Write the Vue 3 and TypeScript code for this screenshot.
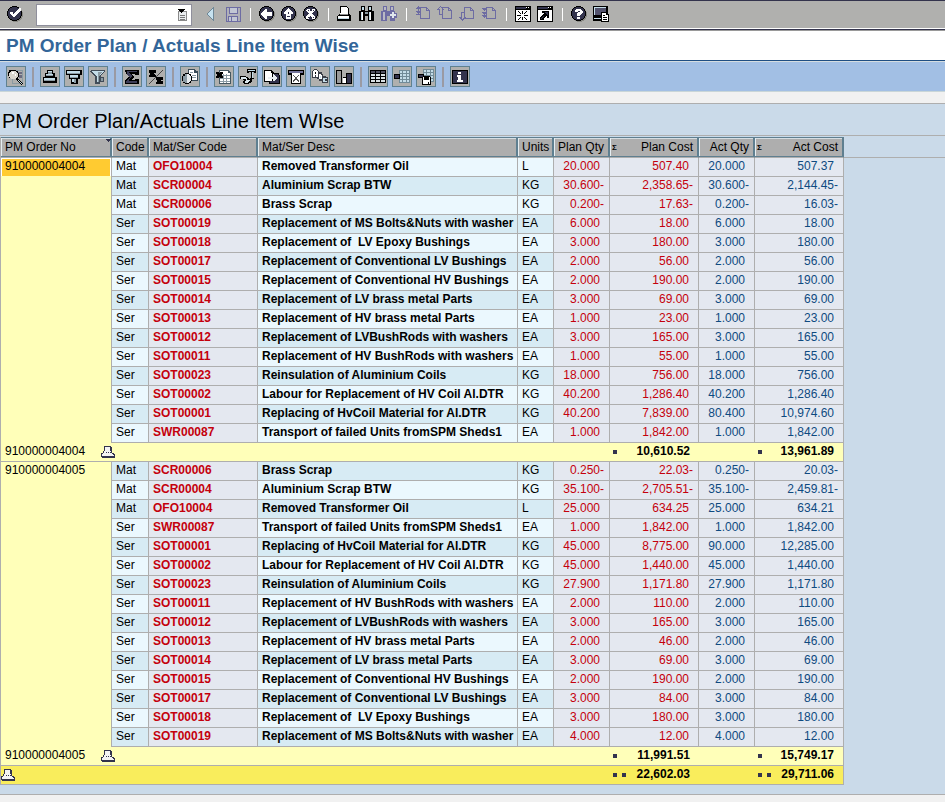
<script setup lang="ts">
interface Layer {
  d: string
  f?: string
  s?: string
}
interface Tool {
  label: string
  icon: Layer[]
}
interface Item {
  kind: string
  code: string
  desc: string
  unit: string
  planQty: string
  planCost: string
  actQty: string
  actCost: string
}
interface Group {
  order: string
  items: Item[]
  planCost: string
  actCost: string
}

const K = '#000000'
const D = '#33334d'
const W = '#ffffff'
const B = '#c3dce8'
const G = '#8a9aa3'
const P = '#6d6ca3'

const disc =
  'M5 0h5v1h2v1h1v1h1v2h1v5h-1v2h-1v1h-1v1h-2v1h-5v-1h-2v-1h-1v-1h-1v-2h-1v-5h1v-2h1v-1h1v-1h2z'
const discLayers: Layer[] = [
  { d: 'M6 1h5v1h2v1h1v1h1v2h1v5h-1v2h-1v1h-1v1h-2v1h-5v-1h-2v-1h-1z', f: '#8b8b86' },
  { d: disc, f: K },
  { d: 'M5 1h5v1h2v1h1v2h1v5h-1v2h-1v1h-2v1h-5v-1h-2v-1h-1v-2h-1v-5h1v-2h1v-1h2z', f: D },
]
const page = 'M5.5 1.5h6l3 3v8h-9z M11.5 1.5v3h3'
const sheet = 'M1 1h14v14h-14z'

const systemTools: Tool[][] = [
  [
    {
      label: 'Back',
      icon: [
        ...discLayers,
        { d: 'M2 7h1v-1h1v-1h1v-1h1v-1h2v3h5v4h-5v3h-2v-1h-1v-1h-1v-1h-1v-1h-1z', f: W },
      ],
    },
    {
      label: 'Exit',
      icon: [
        ...discLayers,
        { d: 'M7 2h1v1h1v1h1v1h1v1h1v2h-2v1h-5v-1h-2v-2h1v-1h1v-1h1v-1h1z M5 9h5v4h-5z', f: W },
        { d: 'M7 6h1v2h-1z M6 10h3v1h-3z', f: D },
      ],
    },
    {
      label: 'Cancel',
      icon: [
        ...discLayers,
        { d: 'M4 3h3v2h2v-2h3v2h-1v1h-1v1h-1v1h1v1h1v1h1v3h-3v-2h-1v-1h-1v1h-1v2h-3v-3h1v-1h1v-1h1v-1h-1v-1h-1v-1h-1z', f: W },
        { d: 'M5 4h1v1h-1z M10 11h1v1h-1z M10 4h1v1h-1z M5 11h1v1h-1z', f: D },
      ],
    },
  ],
  [
    {
      label: 'Print',
      icon: [
        { d: 'M3 0h7v1h1v1h1v6h1v1h1v6h-14v-5h1v-1h1v-1h1z', f: K },
        { d: 'M4 1h6v1h1v6h-8v-1h1z M1 10h11v3h-11z', f: W },
        { d: 'M1 12h11v1h-11z', f: B },
        { d: 'M3 8h8v1h-8z', f: '#8d8d8d' },
      ],
    },
    {
      label: 'Find',
      icon: [
        { d: 'M2 0h4v5h3v-5h4v5h2v10h-6v-5h-3v5h-6v-10h2z', f: K },
        { d: 'M3 1h2v3h-2z M2 6h2v8h-2z M10 1h2v3h-2z M10 6h2v8h-2z', f: B },
        { d: 'M3 6h1v8h-1z M11 6h1v8h-1z', f: W },
        { d: 'M6 6h3v2h-3z', f: G },
      ],
    },
    {
      label: 'Find next',
      icon: [
        { d: 'M2 0h4v5h3v-5h4v5h1v2h2v5h-2v3h-5v-5h-3v5h-6v-10h2z', f: P },
        { d: 'M3 1h2v3h-2z M2 6h2v8h-2z M10 1h2v3h-2z', f: '#b9b9c4' },
        { d: 'M11 6h2v2h2v2h-2v2h-2v-2h-2v-2h2z', f: '#dfe6ec' },
      ],
    },
  ],
  [
    {
      label: 'First page',
      icon: [
        { d: page, s: P },
        { d: 'M3 0h1v1h1v1h1v1h-2v2h2v1h-1v1h-1v2h-1v-2h-1v-1h-1v-1h2v-2h-2v-1h1v-1h1z M1 8h5v1h-5z', f: P },
      ],
    },
    {
      label: 'Previous page',
      icon: [
        { d: page, s: P },
        { d: 'M3.5 0.5l3 3h-1.5v5h-3v-5h-1.5z', s: P, f: '#b0b0ae' },
      ],
    },
    {
      label: 'Next page',
      icon: [
        { d: page, s: P },
        { d: 'M3.5 14l-3-3h1.5v-5h3v5h1.5z', s: P, f: '#b0b0ae' },
      ],
    },
    {
      label: 'Last page',
      icon: [
        { d: page, s: P },
        { d: 'M1 2h5v1h-1v1h-1v1h-1v-1h-1v-1h-1z M1 6h5v1h-1v1h-1v1h2v1h-1v1h-1v1h-1v-1h-1v-1h-1v-1h2v-1h-1v-1h-1z', f: P },
      ],
    },
  ],
  [
    {
      label: 'Create session',
      icon: [
        { d: 'M0 0h16v16h-16z', f: K },
        { d: 'M1 4h14v11h-14z', f: W },
        { d: 'M1 1h10v2h-10z', f: D },
        { d: 'M11 1h1v1h-1z M13 1h1v1h-1z', f: W },
        { d: 'M7 5h1v3h-1z M7 11h1v3h-1z M2 9h4v1h-4z M9 9h4v1h-4z M3 5h1v1h-1z M4 6h1v1h-1z M5 7h1v1h-1z M11 5h1v1h-1z M10 6h1v1h-1z M9 7h1v1h-1z M5 11h1v1h-1z M4 12h1v1h-1z M3 13h1v1h-1z M9 11h1v1h-1z M10 12h1v1h-1z M11 13h1v1h-1z', f: K },
      ],
    },
    {
      label: 'Generate shortcut',
      icon: [
        { d: 'M0 0h16v16h-16z', f: K },
        { d: 'M1 4h14v11h-14z', f: W },
        { d: 'M1 1h10v2h-10z', f: D },
        { d: 'M11 1h1v1h-1z M13 1h1v1h-1z', f: W },
        { d: 'M5 5h7v7h-2v-2h-1v1h-1v1h-1v2h-4v-3h1v-1h1v-1h1v-1h1v-1h-2z', f: K },
        { d: 'M4 12h1v-1h1v-1h1v1h-1v1h-1v1h-1z M8 6h3v3h-1v-1h-1v-1h-1z', f: D },
      ],
    },
  ],
  [
    {
      label: 'Help',
      icon: [
        ...discLayers,
        { d: 'M5 3h5v1h1v1h1v2h-1v1h-1v1h-1v1h-3v-3h1v-1h2v-1h-2v1h-3v-2h1z M6 11h3v2h-3z', f: W },
      ],
    },
    {
      label: 'Customize local layout',
      icon: [
        { d: 'M0 0h15v11h-15z M0 11h16v4h-16z', f: K },
        { d: 'M1 1h12v1h-12z M1 1h1v8h-1z M1 12h8v1h-8z', f: B },
        { d: 'M2 2h11v7h-11z', f: '#53536e' },
        { d: 'M8 6h6v2h2v8h-8z', f: K },
        { d: 'M9 7h4v2h2v6h-6z', f: W },
        { d: 'M10 9h2v1h-2z M10 11h4v1h-4z M10 13h4v1h-4z', f: K },
      ],
    },
  ],
]

const reportTools: Tool[][] = [
  [
    {
      label: 'Details',
      icon: [
        { d: 'M4.5 1.5h10v13h-10z', s: G },
        { d: 'M10 3h4v2h-4z M11 6h3v3h-3z', f: '#6b6b80' },
        { d: 'M3 1h5v1h2v2h1v4h-1v2h1v1h1v1h1v1h1v1h1v1h-1v1h-1v-1h-1v-1h-1v-1h-1v-1h-1v-1h-1v-1h-5v-1h-2v-2h-1v-4h1v-2h2z', f: K },
        { d: 'M3 2h5v1h1v1h1v4h-1v1h-1v1h-5v-1h-1v-1h-1v-4h1v-1h1z', f: '#d9d6ce' },
        { d: 'M4 3h2v2h-2z M7 5h1v2h-1z', f: W },
        { d: 'M10 11h1v1h1v1h1v1h1v1h-1v-1h-1v-1h-1v-1h-1z', f: B },
      ],
    },
  ],
  [
    {
      label: 'Sort ascending',
      icon: [
        { d: 'M5 1h6v3h2v4h2v6h-14v-6h2v-4h2z', f: K },
        { d: 'M6 2h4v2h-4z M4 5h7v2h-7z M2 9h11v3h-11z', f: B },
        { d: 'M6 3h4v2h-4z M4 6h7v1h-7z M2 11h11v1h-11z', f: G },
      ],
    },
    {
      label: 'Sort descending',
      icon: [
        { d: 'M0 1h16v5h-2v4h-2v5h-7v-5h-2v-4h-3z', f: K },
        { d: 'M1 2h13v2h-13z M4 6h8v2h-8z M6 10h4v3h-4z', f: B },
        { d: 'M1 4h13v1h-13z M4 8h8v1h-8z M8 10h2v4h-2z', f: G },
      ],
    },
    {
      label: 'Set filter',
      icon: [
        { d: 'M1 1h14v2h-1v1h-1v1h-1v1h-1v2h3v5h-4v2h-5v-8h-1v-1h-1v-1h-1v-1h-1v-1h-1z', f: '#414c59' },
        { d: 'M2 2h12v1h-1v1h-1v1h-1v1h-1v1h-1v6h-2v-6h-1v-1h-1v-1h-1v-1h-1v-1h-1z', f: B },
        { d: 'M8 3h4v1h-1v1h-1v2h-1v6h-1z M11 9h2v3h-2z', f: G },
      ],
    },
  ],
  [
    {
      label: 'Total',
      icon: [
        { d: 'M1 1h14v5h-4v-1h-3v1h1v1h1v2h-1v1h-1v1h3v-1h4v5h-14v-4h1v-1h1v-1h1v-1h1v-1h-1v-1h-1v-1h-1z', f: K },
        { d: 'M3 2h10v1h-8v1h1v1h1v1h1v2h-1v1h-1v1h-1v2h8v2h-11v-2h1v-1h1v-1h1v-1h1v-1h-1v-1h-1v-1h-1z', f: '#3e3e58' },
      ],
    },
    {
      label: 'Subtotals',
      icon: [
        { d: 'M1 1h7v3h-2v1h1v1h1v2h-7v-2h1v-2h-1z M8 8h7v3h-2v1h2v3h-7v-2h1v-2h-1z', f: K },
        { d: 'M14 1h1v1h-1v1h-1v1h-1v1h-1v1h-1v1h-1v1h-1v1h-1v1h-1v1h-1v1h-1v1h-1v1h-1v1h-1v-1h1v-1h1v-1h1v-1h1v-1h1v-1h1v-1h1v-1h1v-1h1v-1h1v-1h1v-1h1v-1h1z', f: '#444' },
      ],
    },
  ],
  [
    {
      label: 'Print preview',
      icon: [
        { d: 'M6 0h7v1h1v1h2v10h-10z', f: '#394b58' },
        { d: 'M7 1h5v3h3v7h-8z', f: W },
        { d: 'M8 3h3v1h-3z M10 6h4v1h-4z M10 8h4v1h-4z', f: G },
        { d: 'M3 4h4v1h2v2h1v5h-1v2h-2v1h-4v-1h-2v-2h-1v-5h1v-2h2z', f: K },
        { d: 'M3 5h3v9h-3v-1h-2v-6h2z', f: G },
        { d: 'M5 5h2v1h1v1h1v5h-1v1h-1v1h-2z', f: '#e7ecef' },
      ],
    },
  ],
  [
    {
      label: 'Microsoft Excel',
      icon: [
        { d: 'M3 1h10v1h1v1h1v12h-12z', f: '#455761' },
        { d: 'M4 2h8v2h2v10h-10z', f: W },
        { d: 'M4 6h10v1h-10z M4 9h10v1h-10z M4 12h10v1h-10z M7 5h1v9h-1z M10 5h1v9h-1z', f: G },
        { d: 'M0 3h3v1h1v-1h3v2h-1v2h1v2h-3v-1h-1v1h-3v-2h1v-2h-1z', f: K },
      ],
    },
    {
      label: 'Word processing',
      icon: [
        { d: 'M7 0h9v4h-2v-1h-1v6h1v1h-4v-1h1v-6h-2v1h-2z', f: K },
        { d: 'M8 1h7v1h-7z M12 3h1v6h-1z', f: B },
        { d: 'M0 7h6v1h2v1h1v1h3v3h-1v1h-2v1h-5v-1h-1v-2h1v-1h-1v-1h-3z', f: K },
        { d: 'M1 8h5v1h1v2h3v1h-1v1h-1v1h-3v-2h1v-2h-5z', f: '#dbe8ee' },
      ],
    },
    {
      label: 'Local file',
      icon: [
        { d: 'M0 1h8v1h1v1h1v10h-10z', f: K },
        { d: 'M1 2h6v2h2v8h-8z', f: W },
        { d: 'M8 4h7v2h1v9h-11v-3h3z', f: K },
        { d: 'M9 5h5v1h1v8h-9v-2h3z', f: D },
        { d: 'M4 8h5v-3h1v1h1v1h1v1h1v2h-1v1h-1v1h-2v-2h-5z', f: '#e8eef2' },
      ],
    },
    {
      label: 'Mail recipient',
      icon: [
        { d: 'M0 1h16v5h-3v9h-10v-9h-3z', f: K },
        { d: 'M1 2h14v2h-14z', f: '#74749a' },
        { d: 'M4 4h8v10h-8z', f: W },
        { d: 'M5 6h1v1h1v1h2v-1h1v-1h1v1h-1v1h-1v2h1v1h1v2h-1v-1h-1v-1h-2v1h-1v1h-1v-2h1v-1h1v-2h-1v-1h-1z', f: '#545454' },
      ],
    },
    {
      label: 'ABC analysis',
      icon: [
        { d: 'M2 0h3v1h1v1h1v1h3v2h1v2h3v1h2v6h-6v-2h-3v-2h-2v-1h-5v-7h1v-1h1z', f: '#3a3f49' },
        { d: 'M2 1h3v1h1v6h-2v-2h-1v2h-2v-6h1z M7 5h2v1h1v4h-3z', f: W },
        { d: 'M3 3h1v2h-1z', f: K },
        { d: 'M8 7h1v2h-1z M11 9h4v1h-2v2h2v1h-4z', f: B },
      ],
    },
    {
      label: 'Graphic',
      icon: [
        { d: 'M0 1h6v13h1v-6h3v-4h6v11h-16z', f: K },
        { d: 'M1 2h4v12h-4z', f: '#9b9b9b' },
        { d: 'M7 9h3v5h-3z', f: W },
        { d: 'M11 5h4v9h-4z', f: D },
      ],
    },
  ],
  [
    {
      label: 'Change layout',
      icon: [
        { d: 'M0 1h16v13h-16z', f: K },
        { d: 'M1 5h4v2h-4z M6 5h4v2h-4z M11 5h4v2h-4z M1 8h4v2h-4z M6 8h4v2h-4z M11 8h4v2h-4z M1 11h4v2h-4z M6 11h4v2h-4z M11 11h4v2h-4z', f: '#d9e0e3' },
        { d: 'M1 2h4v2h-4z M6 2h4v2h-4z M11 2h4v2h-4z', f: '#50505f' },
      ],
    },
    {
      label: 'Select layout',
      icon: [
        { d: 'M5 1h11v13h-11z', f: '#718b98' },
        { d: 'M6 2h2v2h-2z M9 2h3v2h-3z M13 2h2v2h-2z M6 5h2v2h-2z M9 5h3v2h-3z M13 5h2v2h-2z M6 8h2v2h-2z M9 8h3v2h-3z M13 8h2v2h-2z M6 11h2v2h-2z M9 11h3v2h-3z M13 11h2v2h-2z', f: B },
        { d: 'M0 5h6v5h-6z', f: K },
        { d: 'M1 6h4v3h-4z', f: D },
      ],
    },
    {
      label: 'Save layout',
      icon: [
        { d: 'M5 0h11v13h-11z', f: '#718b98' },
        { d: 'M6 1h2v2h-2z M9 1h3v2h-3z M13 1h2v2h-2z M6 4h2v2h-2z M9 4h3v2h-3z M13 4h2v2h-2z M13 7h2v2h-2z M13 10h2v2h-2z', f: B },
        { d: 'M0 5h6v4h-6z M4 7h8v1h1v8h-9z', f: K },
        { d: 'M1 6h4v2h-4z', f: D },
        { d: 'M5 8h1v3h5v-3h1v7h-1v-2h-1v2h-5z', f: W },
      ],
    },
  ],
  [
    {
      label: 'Information',
      icon: [
        { d: 'M0 1h16v14h-16z', f: K },
        { d: 'M1 2h14v12h-14z', f: D },
        { d: 'M6 3h3v2h-3z M5 6h4v5h2v2h-6v-2h1v-3h-1z', f: W },
      ],
    },
  ],
]

const checkIcon: Layer[] = [
  ...discLayers,
  { d: 'M3 6h3v2h1v-1h1v-1h1v-1h1v-1h1v-1h1v-1h2v3h-1v1h-1v1h-1v1h-1v1h-1v1h-1v1h-2v-1h-1v-1h-1v-1h-1z', f: W },
]
const historyIcon: Layer[] = [
  { d: 'M1 2h9v10h-9z', f: '#e9ecee' },
  { d: 'M1.5 2.5h8v9h-8z', s: '#8a8a8a' },
  { d: 'M3 6h5v1h-5z M3 8h5v1h-5z M3 10h5v1h-5z', f: '#777' },
  { d: 'M1 0h7v1h-1v1h-1v1h-1v1h-1v-1h-1v-1h-1v-1h-1z', f: K },
]
const collapseIcon: Layer[] = [
  { d: 'M7 1v12l-6-6z', f: '#c6e2f0' },
  { d: 'M7 1v12l-6-6z', s: '#6f8796' },
]
const saveIcon: Layer[] = [
  { d: sheet, s: P, f: '#b0b0b8' },
  { d: 'M4 1.5h8v6h-8z M3.5 14.5v-4h9v4 M6.5 10.5v4', s: P, f: '#c2c7d4' },
]
const printIcon: Layer[] = [
  { d: 'M3 0h7v1h1v6h2v1h1v4h-13v-1h-1v-4h2v-2h1z', f: D },
  { d: 'M4 1h5v4h1v2h1v1h1v1h1v1h-12v-2h1v-1h1v-2h1z', f: '#f4f4f4' },
  { d: 'M5 6h1v1h-1z M7 6h1v1h-1z M9 6h1v1h-1z', f: D },
]
const sortMark: Layer[] = [{ d: 'M0 0h5v1h-1v1h-1v1h-1v-1h-1v-1h-1z', f: D }]

const parse = (rows: string): Item[] =>
  rows
    .trim()
    .split('\n')
    .map((row) => {
      const [kind, code, desc, unit, planQty, planCost, actQty, actCost] = row.trim().split('|')
      return { kind, code, desc, unit, planQty, planCost, actQty, actCost }
    })

const groups: Group[] = [
  {
    order: '910000004004',
    planCost: '10,610.52',
    actCost: '13,961.89',
    items: parse(`
      Mat|OFO10004|Removed Transformer Oil|L|20.000|507.40|20.000|507.37
      Mat|SCR00004|Aluminium Scrap BTW|KG|30.600-|2,358.65-|30.600-|2,144.45-
      Mat|SCR00006|Brass Scrap|KG|0.200-|17.63-|0.200-|16.03-
      Ser|SOT00019|Replacement of MS Bolts&Nuts with washer|EA|6.000|18.00|6.000|18.00
      Ser|SOT00018|Replacement of  LV Epoxy Bushings|EA|3.000|180.00|3.000|180.00
      Ser|SOT00017|Replacement of Conventional LV Bushings|EA|2.000|56.00|2.000|56.00
      Ser|SOT00015|Replacement of Conventional HV Bushings|EA|2.000|190.00|2.000|190.00
      Ser|SOT00014|Replacement of LV brass metal Parts|EA|3.000|69.00|3.000|69.00
      Ser|SOT00013|Replacement of HV brass metal Parts|EA|1.000|23.00|1.000|23.00
      Ser|SOT00012|Replacement of LVBushRods with washers|EA|3.000|165.00|3.000|165.00
      Ser|SOT00011|Replacement of HV BushRods with washers|EA|1.000|55.00|1.000|55.00
      Ser|SOT00023|Reinsulation of Aluminium Coils|KG|18.000|756.00|18.000|756.00
      Ser|SOT00002|Labour for Replacement of HV Coil Al.DTR|KG|40.200|1,286.40|40.200|1,286.40
      Ser|SOT00001|Replacing of HvCoil Material for Al.DTR|KG|40.200|7,839.00|80.400|10,974.60
      Ser|SWR00087|Transport of failed Units fromSPM Sheds1|EA|1.000|1,842.00|1.000|1,842.00
    `),
  },
  {
    order: '910000004005',
    planCost: '11,991.51',
    actCost: '15,749.17',
    items: parse(`
      Mat|SCR00006|Brass Scrap|KG|0.250-|22.03-|0.250-|20.03-
      Mat|SCR00004|Aluminium Scrap BTW|KG|35.100-|2,705.51-|35.100-|2,459.81-
      Mat|OFO10004|Removed Transformer Oil|L|25.000|634.25|25.000|634.21
      Ser|SWR00087|Transport of failed Units fromSPM Sheds1|EA|1.000|1,842.00|1.000|1,842.00
      Ser|SOT00001|Replacing of HvCoil Material for Al.DTR|KG|45.000|8,775.00|90.000|12,285.00
      Ser|SOT00002|Labour for Replacement of HV Coil Al.DTR|KG|45.000|1,440.00|45.000|1,440.00
      Ser|SOT00023|Reinsulation of Aluminium Coils|KG|27.900|1,171.80|27.900|1,171.80
      Ser|SOT00011|Replacement of HV BushRods with washers|EA|2.000|110.00|2.000|110.00
      Ser|SOT00012|Replacement of LVBushRods with washers|EA|3.000|165.00|3.000|165.00
      Ser|SOT00013|Replacement of HV brass metal Parts|EA|2.000|46.00|2.000|46.00
      Ser|SOT00014|Replacement of LV brass metal Parts|EA|3.000|69.00|3.000|69.00
      Ser|SOT00015|Replacement of Conventional HV Bushings|EA|2.000|190.00|2.000|190.00
      Ser|SOT00017|Replacement of Conventional LV Bushings|EA|3.000|84.00|3.000|84.00
      Ser|SOT00018|Replacement of  LV Epoxy Bushings|EA|3.000|180.00|3.000|180.00
      Ser|SOT00019|Replacement of MS Bolts&Nuts with washer|EA|4.000|12.00|4.000|12.00
    `),
  },
]

const digits = (v: string): string => v.replace('-', '')
const sign = (v: string): string => (v.endsWith('-') ? '-' : '')
</script>

<template>
  <main class="window">
    <header class="system-bar">
      <button class="icon-btn" type="button" aria-label="Enter">
        <svg viewBox="0 0 16 16" width="16" height="16"><path v-for="(l, i) in checkIcon" :key="i" :d="l.d" :fill="l.f ?? 'none'" :stroke="l.s ?? 'none'" /></svg>
      </button>
      <div class="command">
        <input class="command-input" type="text" aria-label="Command field" />
        <button class="command-list" type="button" aria-label="Command history">
          <svg viewBox="0 0 11 12" width="11" height="12"><path v-for="(l, i) in historyIcon" :key="i" :d="l.d" :fill="l.f ?? 'none'" :stroke="l.s ?? 'none'" /></svg>
        </button>
      </div>
      <button class="collapse" type="button" aria-label="Hide command field">
        <svg viewBox="0 0 8 14" width="8" height="14"><path v-for="(l, i) in collapseIcon" :key="i" :d="l.d" :fill="l.f ?? 'none'" :stroke="l.s ?? 'none'" /></svg>
      </button>
      <button class="icon-btn" type="button" aria-label="Save">
        <svg viewBox="0 0 16 16" width="16" height="16"><path v-for="(l, i) in saveIcon" :key="i" :d="l.d" :fill="l.f ?? 'none'" :stroke="l.s ?? 'none'" /></svg>
      </button>
      <template v-for="(set, s) in systemTools" :key="s">
        <span class="divider"></span>
        <button v-for="t in set" :key="t.label" class="icon-btn" type="button" :aria-label="t.label">
          <svg viewBox="0 0 16 16" width="16" height="16"><path v-for="(l, i) in t.icon" :key="i" :d="l.d" :fill="l.f ?? 'none'" :stroke="l.s ?? 'none'" /></svg>
        </button>
      </template>
    </header>

    <h1 class="screen-title">PM Order Plan / Actuals Line Item Wise</h1>

    <nav class="report-bar" aria-label="Report functions">
      <template v-for="(set, s) in reportTools" :key="s">
        <span v-if="s > 0" class="report-divider"></span>
        <button v-for="t in set" :key="t.label" class="report-btn" type="button" :aria-label="t.label">
          <svg viewBox="0 0 16 16" width="16" height="16"><path v-for="(l, i) in t.icon" :key="i" :d="l.d" :fill="l.f ?? 'none'" :stroke="l.s ?? 'none'" /></svg>
        </button>
      </template>
    </nav>

    <section class="report">
      <h2 class="report-title">PM Order Plan/Actuals Line Item WIse</h2>
      <div class="grid-area">
        <table class="grid">
          <colgroup>
            <col class="w-order" />
            <col class="w-kind" />
            <col class="w-code" />
            <col class="w-desc" />
            <col class="w-unit" />
            <col class="w-qty" />
            <col class="w-cost" />
            <col class="w-qty" />
            <col class="w-cost" />
          </colgroup>
          <thead>
            <tr>
              <th scope="col">
                PM Order No
                <svg class="sort-mark" viewBox="0 0 5 3" width="5" height="3"><path v-for="(l, i) in sortMark" :key="i" :d="l.d" :fill="l.f" /></svg>
              </th>
              <th scope="col">Code</th>
              <th scope="col">Mat/Ser Code</th>
              <th scope="col">Mat/Ser Desc</th>
              <th scope="col">Units</th>
              <th scope="col" class="right">Plan Qty</th>
              <th scope="col" class="right"><div class="spread"><span class="sum">Σ</span>Plan Cost</div></th>
              <th scope="col" class="right">Act Qty</th>
              <th scope="col" class="right"><div class="spread"><span class="sum">Σ</span>Act Cost</div></th>
            </tr>
          </thead>
          <tbody v-for="(g, gi) in groups" :key="g.order">
            <tr v-for="(r, ri) in g.items" :key="r.code" :class="{ odd: (gi * 15 + ri) % 2 === 1 }">
              <th v-if="ri === 0" class="order" scope="rowgroup" :rowspan="g.items.length">
                <div class="order-no" :class="{ focused: gi === 0 }">{{ g.order }}</div>
              </th>
              <td class="band">{{ r.kind }}</td>
              <td class="code">{{ r.code }}</td>
              <td class="band desc">{{ r.desc }}</td>
              <td class="band">{{ r.unit }}</td>
              <td class="num plan">{{ digits(r.planQty) }}<span class="sign">{{ sign(r.planQty) }}</span></td>
              <td class="num plan">{{ digits(r.planCost) }}<span class="sign">{{ sign(r.planCost) }}</span></td>
              <td class="num act">{{ digits(r.actQty) }}<span class="sign">{{ sign(r.actQty) }}</span></td>
              <td class="num act">{{ digits(r.actCost) }}<span class="sign">{{ sign(r.actCost) }}</span></td>
            </tr>
            <tr class="subtotal">
              <th colspan="6" scope="row">
                <div class="total-label">
                  {{ g.order }}
                  <svg viewBox="0 0 14 12" width="14" height="12"><path v-for="(l, i) in printIcon" :key="i" :d="l.d" :fill="l.f" /></svg>
                </div>
              </th>
              <td><div class="spread"><span class="dots"><i></i></span><b>{{ g.planCost }}</b></div></td>
              <td></td>
              <td class="last"><div class="spread"><span class="dots"><i></i></span><b>{{ g.actCost }}</b></div></td>
            </tr>
          </tbody>
          <tfoot>
            <tr class="grand">
              <th colspan="6" scope="row" class="grand-label">
                <div class="total-label">
                  <svg viewBox="0 0 14 12" width="14" height="12" role="img" aria-label="Grand total"><path v-for="(l, i) in printIcon" :key="i" :d="l.d" :fill="l.f" /></svg>
                </div>
              </th>
              <td><div class="spread"><span class="dots"><i></i><i></i></span><b>22,602.03</b></div></td>
              <td></td>
              <td class="last"><div class="spread"><span class="dots"><i></i><i></i></span><b>29,711.06</b></div></td>
            </tr>
          </tfoot>
        </table>
        <div class="grid-rest"></div>
      </div>
    </section>
  </main>
</template>

<style>
body {
  margin: 0;
  background: #f1f1f1;
}
</style>

<style scoped>
.window {
  font-family: 'Liberation Sans', Arial, sans-serif;
  font-size: 12px;
  color: #000;
}
svg {
  display: block;
  shape-rendering: crispEdges;
}
button {
  margin: 0;
  padding: 0;
  border: 0;
  background: none;
  flex: none;
}
.system-bar {
  display: flex;
  align-items: center;
  gap: 6px;
  box-sizing: border-box;
  height: 31px;
  padding: 0 7px 4px;
  background: #b0b0ae;
  border-top: 1px solid #33334d;
  box-shadow: inset 0 -1px #9a9a9a, inset 0 -2px #33334d, inset 0 -3px #fff;
}
.command {
  display: flex;
  align-items: center;
  box-sizing: border-box;
  width: 156px;
  height: 22px;
  margin: 2px 8px 0 7px;
  padding-right: 3px;
  background: #fff;
  border: 1px solid #8f8f9c;
}
.command-input {
  flex: 1;
  min-width: 0;
  height: 18px;
  padding: 0 4px;
  border: 0;
  outline: 0;
  background: transparent;
  font: inherit;
}
.collapse {
  margin-right: 5px;
}
.divider {
  flex: none;
  box-sizing: border-box;
  width: 2px;
  height: 13px;
  margin: 0 2px;
  border-right: 1px solid #fff;
}
.screen-title {
  box-sizing: border-box;
  height: 31px;
  margin: 0;
  padding-left: 6px;
  background: #fff;
  border-bottom: 1px solid #d5dde0;
  box-shadow: inset 0 -1px #1f4e82;
  color: #336699;
  font-size: 19px;
  line-height: 29px;
  white-space: nowrap;
}
.report-bar {
  display: flex;
  align-items: center;
  gap: 4px;
  box-sizing: border-box;
  height: 30px;
  padding: 0 6px;
  background: #a2bfe4;
  border-bottom: 1px solid #c9d6d8;
  margin-bottom: 11px;
}
.report-btn {
  display: grid;
  place-items: center;
  box-sizing: border-box;
  width: 20px;
  height: 21px;
  background: #b0b0ae;
  border: 1px solid #5f8190;
}
.report-divider {
  flex: none;
  width: 2px;
  height: 20px;
  margin: 0 2px;
  background: #9a9aa3;
}
.report {
  padding-bottom: 9px;
  background: #cadae9;
  border-top: 1px solid #aeaeae;
  border-bottom: 1px solid #aeaeae;
}
.report-title {
  height: 31px;
  margin: 0 0 1px;
  padding-left: 2px;
  border-bottom: 1px solid #aeaeae;
  font-size: 20px;
  font-weight: 400;
  line-height: 34px;
  white-space: nowrap;
}
.grid-area {
  display: flex;
  align-items: flex-start;
}
.grid-rest {
  flex: 1;
  height: 20px;
  border-bottom: 1px solid #aeaeae;
}
.grid {
  flex: none;
  width: 844px;
  table-layout: fixed;
  border-collapse: separate;
  border-spacing: 0;
  border-left: 1px solid #aeaeae;
}
.w-order { width: 111px; }
.w-kind { width: 37px; }
.w-code { width: 109px; }
.w-desc { width: 260px; }
.w-unit { width: 36px; }
.w-qty { width: 56px; }
.w-cost { width: 89px; }
th,
td {
  box-sizing: border-box;
  height: 19px;
  padding: 0 4px;
  border-right: 1px solid #aeaeae;
  border-bottom: 1px solid #aeaeae;
  font-weight: 400;
  line-height: 17px;
  text-align: left;
  vertical-align: top;
  white-space: pre;
}
thead th {
  position: relative;
  height: 21px;
  padding: 2px 4px 0;
  background: #aeaeae;
  border-right-color: #5f7f90;
  box-shadow: inset -1px 0 #5f7f90, inset 0 1px #5f7f90, inset 0 -1px #5f7f90, inset 1px 0 #e6eef2, inset 0 2px #d5dde2;
  white-space: nowrap;
}
.sort-mark {
  position: absolute;
  top: 2px;
  right: 0;
}
thead .right {
  padding-right: 5px;
  text-align: right;
}
.spread {
  display: flex;
  justify-content: space-between;
}
thead .spread {
  margin-left: -2px;
}
.sum {
  font-size: 8px;
  font-weight: 700;
}
.band {
  background: #ebf8fe;
}
.odd .band {
  background: #d7ebf4;
}
.desc {
  font-weight: 700;
}
.code {
  background: #e4e8f0;
  color: #c4000c;
  font-weight: 700;
}
.num {
  padding-right: 5px;
  background: #e4e8f0;
  text-align: right;
}
.plan {
  color: #c4000c;
}
.act {
  color: #0e4a80;
}
.sign {
  display: inline-block;
  width: 4px;
}
.order {
  padding: 0;
  background: #ffffb9;
  border-bottom: 0;
}
.order-no {
  height: 17px;
  padding-left: 3px;
  border: 1px solid transparent;
  border-bottom: 0;
  line-height: 15px;
}
.focused {
  background: #ffcb31;
  border-color: #fff;
}
.subtotal th,
.subtotal td {
  background: #ffffb9;
  border-right: 0;
}
.grand th,
.grand td {
  background: #f9ed5c;
  border-right: 0;
}
.subtotal .last,
.grand .last {
  border-right: 1px solid #aeaeae;
}
.subtotal td,
.grand td {
  padding: 0 9px 0 3px;
}
.total-label {
  display: flex;
  gap: 13px;
}
.total-label svg {
  margin-top: 3px;
}
.grand .grand-label {
  padding-left: 0;
}
.dots {
  display: flex;
  gap: 5px;
  padding-top: 7px;
}
.dots i {
  width: 4px;
  height: 4px;
  background: #33334d;
}
</style>
